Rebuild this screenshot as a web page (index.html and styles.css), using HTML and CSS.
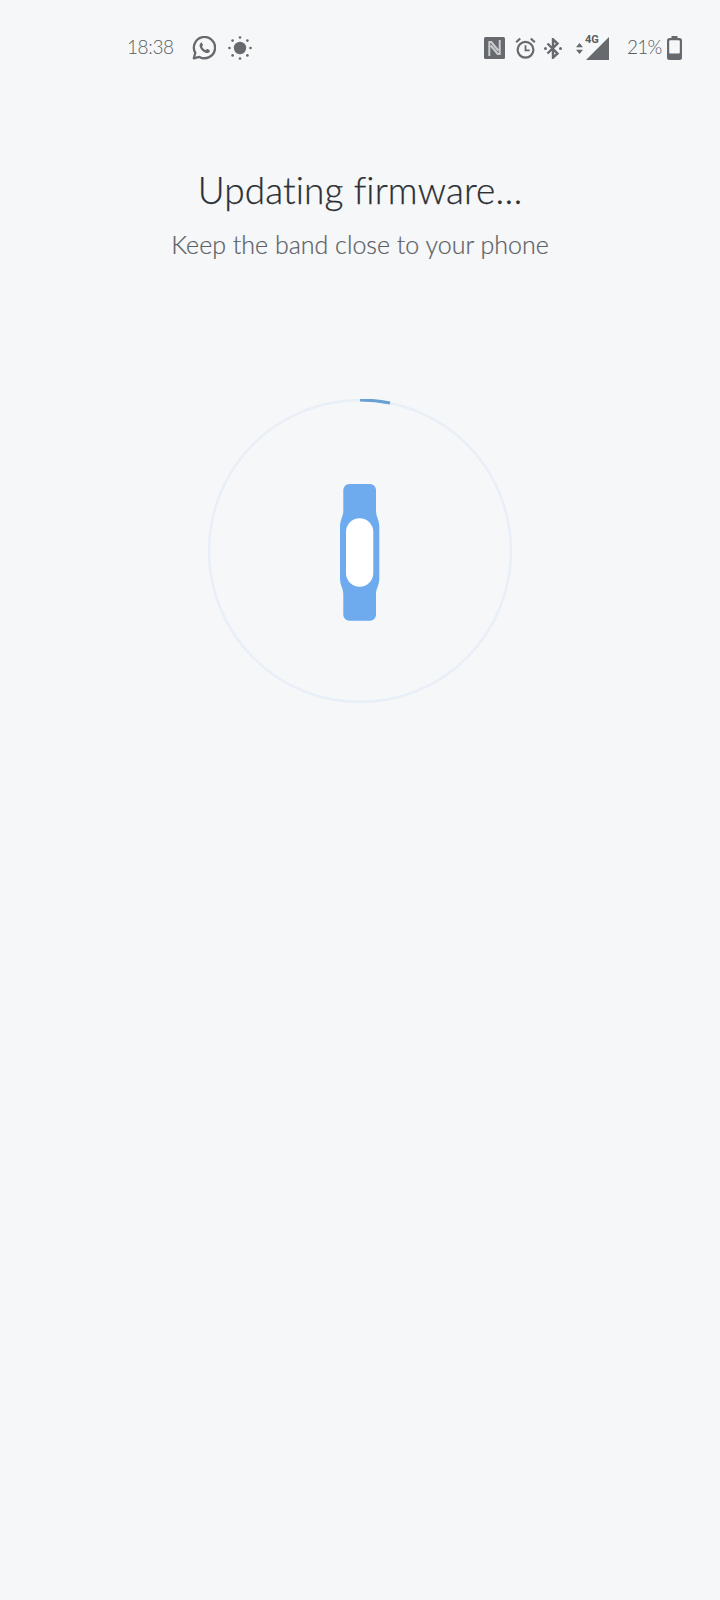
FILE: index.html
```html
<!DOCTYPE html>
<html lang="en">
<head>
<meta charset="utf-8">
<title>Updating firmware</title>
<link rel="stylesheet" href="styles.css">
</head>
<body>
<div class="status">
  <div class="status-left">
    <span class="time">18:38</span>
    <svg class="ic-wa" viewBox="0 0 24 24"><path d="M1.800 22.300l1.500-5.400A10.600 10.600 0 1 1 7.400 20.900z" fill="none" stroke="#666a6e" stroke-width="2.300" stroke-linejoin="round"/><path d="M8.600 6.900c.6-.5 1.300-.4 1.500.2l.8 1.700c.2.400.1.800-.2 1l-.7.800c.8 1.600 2.100 2.900 3.700 3.600l.9-.9c.3-.3.700-.4 1-.2l1.700.9c.5.300.7.800.4 1.400-.7 1.300-2.100 1.900-3.500 1.500-3.200-.9-5.800-3.500-6.600-6.700-.3-1 .2-2.100 1-3.300z" fill="#666a6e"/></svg>
    <svg class="ic-sun" viewBox="0 0 24 24"><circle cx="12" cy="12" r="6.200" fill="#666a6e"/><g fill="#666a6e"><circle cx="12" cy="1.500" r="1.300"/><circle cx="12" cy="22.500" r="1.300"/><circle cx="1.500" cy="12" r="1.300"/><circle cx="22.500" cy="12" r="1.300"/><circle cx="4.600" cy="4.600" r="1.300"/><circle cx="19.400" cy="4.600" r="1.300"/><circle cx="4.600" cy="19.400" r="1.300"/><circle cx="19.400" cy="19.400" r="1.300"/></g></svg>
  </div>
  <div class="status-right">
    <svg class="ic-nfc" viewBox="0 0 21 22"><rect width="21" height="22" rx="1.500" fill="#666a6e"/><path d="M5.300 19V5h2l7 8.500M15.700 3v14h-2L6.700 8.500" fill="none" stroke="#f5f7f9" stroke-width="2" opacity=".7"/></svg>
    <svg class="ic-alarm" viewBox="0 0 21 22"><circle cx="10.500" cy="12.800" r="7.900" fill="none" stroke="#666a6e" stroke-width="2.200"/><path d="M10.500 8.300v5h4.200" fill="none" stroke="#666a6e" stroke-width="1.800"/><path d="M1.200 5.200L5.200 1.500M19.800 5.200L15.800 1.500" stroke="#666a6e" stroke-width="2.200"/></svg>
    <svg class="ic-bt" viewBox="0 0 18 21"><path d="M3.500 5.500l10 10-4.500 4.200V1.300l4.500 4.200-10 10" fill="none" stroke="#666a6e" stroke-width="2.400"/><circle cx="1.500" cy="10.500" r="1.500" fill="#666a6e"/><circle cx="16.500" cy="10.500" r="1.500" fill="#666a6e"/></svg>
    <div class="signal">
      <svg class="ic-arrows" viewBox="0 0 7 11"><path d="M3.500 0L7 4.300H0zM3.500 11L0 6.700h7z" fill="#666a6e"/></svg>
      <span class="net">4G</span>
      <svg class="ic-tri" viewBox="0 0 23 23"><path d="M23 0v23H0z" fill="#666a6e"/></svg>
    </div>
    <span class="pct">21%</span>
    <svg class="ic-batt" viewBox="0 0 15 24"><path d="M4.500 0h6v2h2A2.500 2.500 0 0 1 15 4.500v17a2.500 2.500 0 0 1-2.500 2.500h-10A2.500 2.500 0 0 1 0 21.500v-17A2.500 2.500 0 0 1 2.500 2h2z" fill="#666a6e"/><rect x="2.200" y="4.200" width="10.600" height="13.300" rx="1" fill="#f5f7f9"/></svg>
  </div>
</div>
<main class="content">
  <h1 class="title">Updating firmware…</h1>
  <p class="subtitle">Keep the band close to your phone</p>
  <svg class="progress" viewBox="0 0 304 304">
    <circle cx="152" cy="152" r="151" fill="none" stroke="#e8eff7" stroke-width="2.500"/>
    <path d="M152 1A151 151 0 0 1 182 4" fill="none" stroke="#6a9fd4" stroke-width="3"/>
    <path d="M141.300 85H162a6 6 0 0 1 6 6V112c0 6 3.300 8 3.300 16V179c0 8-3.300 10-3.300 16v20.700a6 6 0 0 1-6 6H141.300a6 6 0 0 1-6-6V195c0-6-3.300-8-3.300-16V128c0-8 3.300-10 3.300-16V91a6 6 0 0 1 6-6z" fill="#6eaaee"/>
    <rect x="138" y="119.300" width="27.300" height="68.400" rx="13.600" fill="#fff"/>
  </svg>
</main>
</body>
</html>
```
FILE: styles.css
```css
html, body {
  margin: 0;
  height: 100%;
}
body {
  background: #f5f7f9;
  font-family: "Lato", "Liberation Sans", sans-serif;
  font-weight: 300;
  overflow: hidden;
}
svg { display: block; flex: none; }
.status {
  display: flex;
  justify-content: space-between;
  align-items: center;
  height: 26px;
  padding: 35px 38px 0 127px;
  color: #585c60;
}
.status-left, .status-right, .signal {
  display: flex;
  align-items: center;
}
.time {
  width: 46px;
  margin: 0 19px 3px 0;
  font-size: 19px;
  letter-spacing: -0.4px;
  white-space: nowrap;
}
.ic-wa { width: 24px; height: 24px; margin-right: 12px; }
.ic-sun { width: 24px; height: 24px; }
.ic-nfc { width: 21px; height: 22px; margin-right: 10px; }
.ic-alarm { width: 21px; height: 22px; margin-right: 8px; }
.ic-bt { width: 18px; height: 21px; margin-right: 14px; }
.signal { position: relative; margin-right: 18px; }
.ic-arrows { width: 7px; height: 11px; margin-right: 3px; }
.ic-tri { width: 23px; height: 23px; }
.net {
  position: absolute;
  left: 9px;
  top: -3px;
  font-size: 11px;
  line-height: 11px;
  font-weight: 700;
  font-family: "Roboto", sans-serif;
}
.pct {
  width: 33px;
  margin: 0 7px 3px 0;
  font-size: 19px;
  letter-spacing: -0.8px;
  white-space: nowrap;
}
.ic-batt { width: 15px; height: 24px; }
.content {
  display: flex;
  flex-direction: column;
  align-items: center;
  padding-top: 108px;
}
.title {
  margin: 0;
  font-size: 37px;
  line-height: 42px;
  font-weight: 300;
  letter-spacing: 0.1px;
  color: #2c2f33;
  -webkit-text-stroke: 0.25px #2c2f33;
}
.subtitle {
  margin: 18px 0 0;
  font-size: 25px;
  line-height: 30px;
  font-weight: 300;
  color: #5c6064;
  -webkit-text-stroke: 0.2px #5c6064;
}
.progress {
  width: 304px;
  height: 304px;
  margin-top: 140px;
}
```
